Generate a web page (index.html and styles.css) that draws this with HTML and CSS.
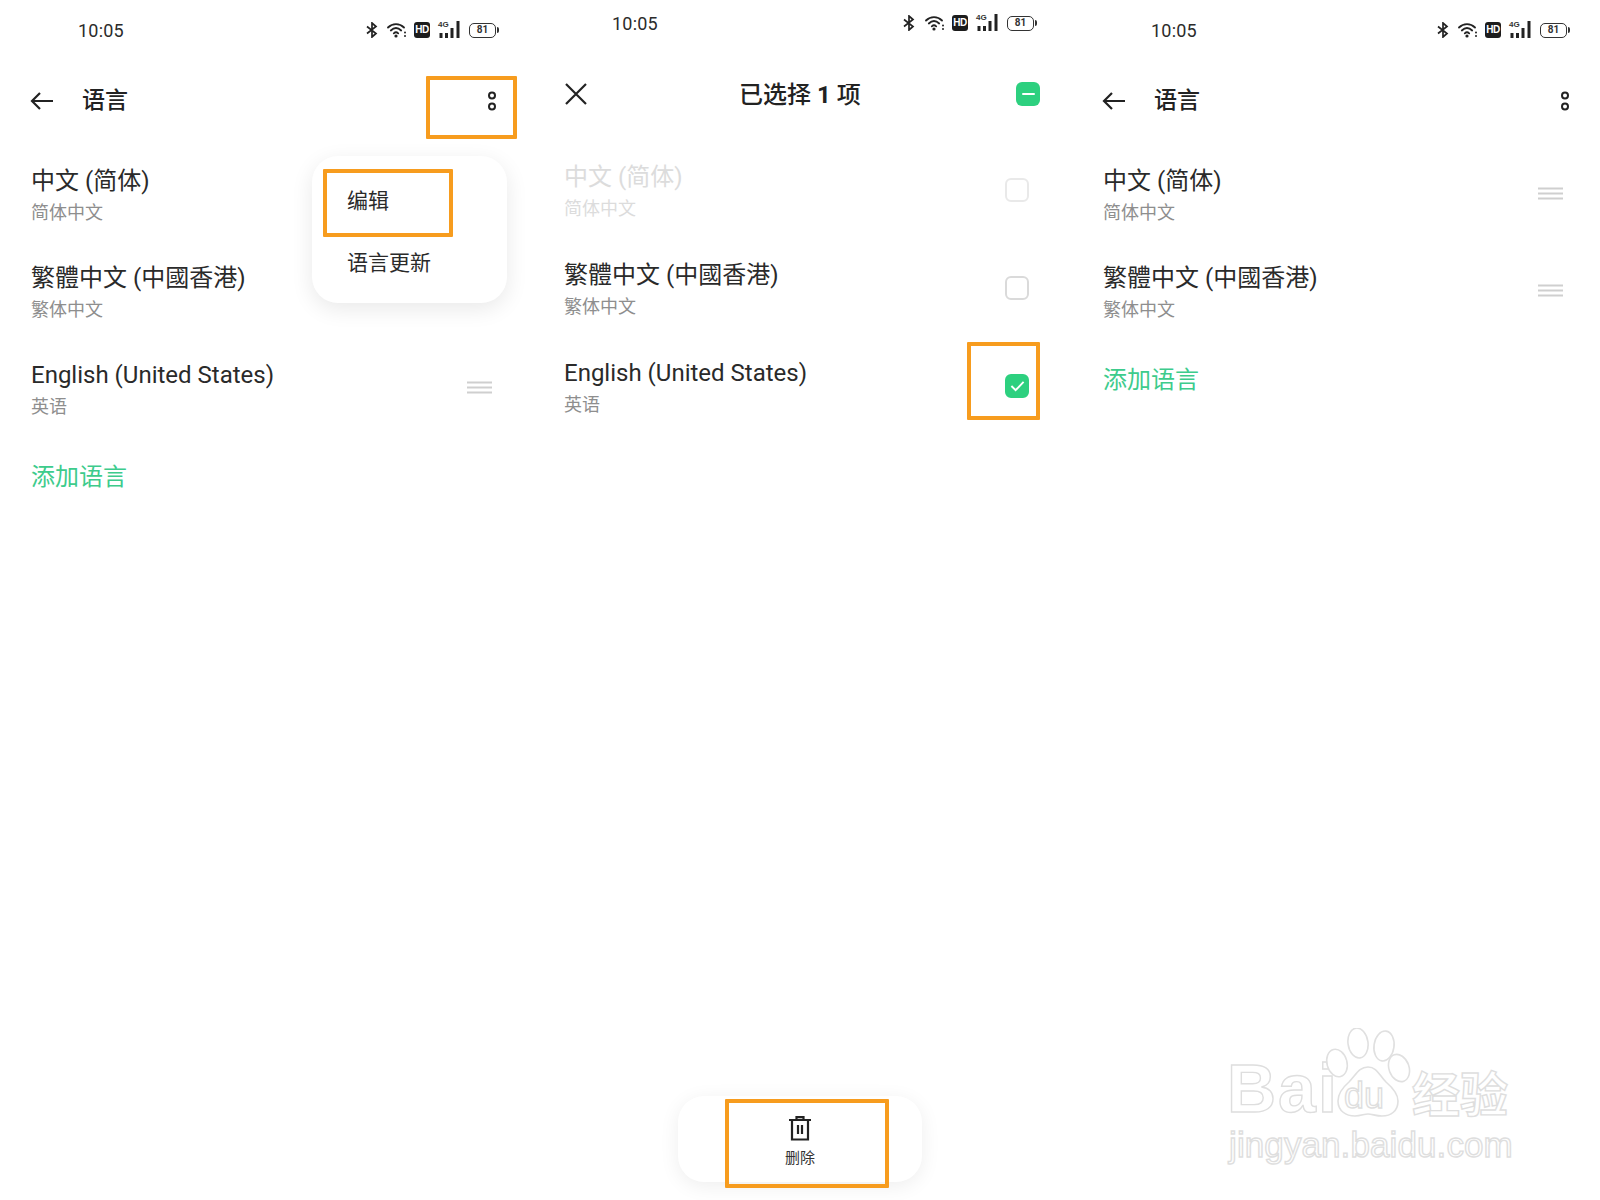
FILE: index.html
```html
<!DOCTYPE html>
<html lang="zh-CN">
<head>
<meta charset="utf-8">
<title>语言</title>
<link rel="stylesheet" href="styles.css">
</head>
<body>
<svg class="defs" width="0" height="0" aria-hidden="true">
  <symbol id="bt" viewBox="0 0 12 16"><path d="M1 4.5 10 11.5 6 15V1l4 3.5L1 11.5" fill="none" stroke="#222" stroke-width="1.7"/></symbol>
  <symbol id="wifi" viewBox="0 0 20 16"><g fill="none" stroke="#222" stroke-width="1.8" stroke-linecap="round"><path d="M1 5.5C5.5 1 12.5 1 17 5.5"/><path d="M3.8 8.5C7 5.5 11 5.5 14.2 8.5"/><path d="M6.8 11.3C8 10.2 10 10.2 11.2 11.3"/></g><circle cx="9" cy="14" r="1.6" fill="#222"/><circle cx="18" cy="10.5" r="1" fill="#222"/><circle cx="18" cy="14" r="1" fill="#222"/></symbol>
  <symbol id="signal" viewBox="0 0 22 18"><g fill="#222"><rect x="1" y="12" width="3" height="5"/><rect x="6.5" y="12" width="3" height="5"/><rect x="12" y="7" width="3" height="10"/><rect x="18" y="0" width="3" height="17"/></g></symbol>
  <symbol id="dots" viewBox="0 0 10 22"><g fill="none" stroke="#222" stroke-width="2"><circle cx="5" cy="5.5" r="3"/><circle cx="5" cy="16.5" r="3"/></g></symbol>
  <symbol id="back" viewBox="0 0 24 20"><path d="M23 10H2M10 2l-8 8 8 8" fill="none" stroke="#222" stroke-width="2.2"/></symbol>
  <symbol id="handle" viewBox="0 0 25 13"><path d="M0 1.5h25M0 6.5h25M0 11.5h25" stroke="#cfcfcf" stroke-width="1.8"/></symbol>
</svg>

<main class="page">
  <section class="panel panel-first">
    <div class="status">
      <span class="time">10:05</span>
      <div class="status-icons">
        <svg class="i-bt"><use href="#bt"/></svg>
        <svg class="i-wifi"><use href="#wifi"/></svg>
        <span class="hd">HD</span>
        <span class="net"><span class="net-label">4G</span><svg class="i-signal"><use href="#signal"/></svg></span>
        <span class="battery"><span class="battery-level">81</span></span>
      </div>
    </div>
    <header class="bar">
      <svg class="i-back"><use href="#back"/></svg>
      <h1 class="title">语言</h1>
      <svg class="i-dots"><use href="#dots"/></svg>
    </header>
    <ul class="list">
      <li class="row"><div><div class="name">中文 (简体)</div><div class="sub">简体中文</div></div></li>
      <li class="row"><div><div class="name">繁體中文 (中國香港)</div><div class="sub">繁体中文</div></div></li>
      <li class="row"><div><div class="name">English (United States)</div><div class="sub">英语</div></div><svg class="i-handle"><use href="#handle"/></svg></li>
    </ul>
    <div class="add">添加语言</div>
    <div class="menu">
      <div class="menu-item">编辑</div>
      <div class="menu-item">语言更新</div>
    </div>
    <div class="mark mark-more"></div>
    <div class="mark mark-edit"></div>
  </section>

  <section class="panel panel-select">
    <div class="status">
      <span class="time">10:05</span>
      <div class="status-icons">
        <svg class="i-bt"><use href="#bt"/></svg>
        <svg class="i-wifi"><use href="#wifi"/></svg>
        <span class="hd">HD</span>
        <span class="net"><span class="net-label">4G</span><svg class="i-signal"><use href="#signal"/></svg></span>
        <span class="battery"><span class="battery-level">81</span></span>
      </div>
    </div>
    <header class="bar bar-select">
      <svg class="i-close" viewBox="0 0 22 22"><path d="M1 1l20 20M21 1 1 21" fill="none" stroke="#222" stroke-width="2.2"/></svg>
      <h1 class="title title-select">已选择 <b>1</b> 项</h1>
      <span class="select-all"><span class="minus"></span></span>
    </header>
    <ul class="list">
      <li class="row row-select row-off"><div><div class="name">中文 (简体)</div><div class="sub">简体中文</div></div><span class="check"></span></li>
      <li class="row row-select"><div><div class="name">繁體中文 (中國香港)</div><div class="sub">繁体中文</div></div><span class="check"></span></li>
      <li class="row row-select"><div><div class="name">English (United States)</div><div class="sub">英语</div></div>
        <span class="check check-on"><svg class="i-tick" viewBox="0 0 16 12"><path d="M1.5 6 6 10.5 14.5 1.5" fill="none" stroke="#fff" stroke-width="2"/></svg></span></li>
    </ul>
    <div class="dock">
      <svg class="i-trash" viewBox="0 0 24 26"><path d="M1 5h22M8.5 5V2.2h7V5M4 5v19.5h16V5M10 10v9M14 10v9" fill="none" stroke="#222" stroke-width="2.2"/></svg>
      <span class="dock-label">删除</span>
    </div>
    <div class="mark mark-check"></div>
    <div class="mark mark-delete"></div>
  </section>

  <section class="panel panel-last">
    <div class="status">
      <span class="time">10:05</span>
      <div class="status-icons">
        <svg class="i-bt"><use href="#bt"/></svg>
        <svg class="i-wifi"><use href="#wifi"/></svg>
        <span class="hd">HD</span>
        <span class="net"><span class="net-label">4G</span><svg class="i-signal"><use href="#signal"/></svg></span>
        <span class="battery"><span class="battery-level">81</span></span>
      </div>
    </div>
    <header class="bar">
      <svg class="i-back"><use href="#back"/></svg>
      <h1 class="title">语言</h1>
      <svg class="i-dots"><use href="#dots"/></svg>
    </header>
    <ul class="list">
      <li class="row"><div><div class="name">中文 (简体)</div><div class="sub">简体中文</div></div><svg class="i-handle"><use href="#handle"/></svg></li>
      <li class="row"><div><div class="name">繁體中文 (中國香港)</div><div class="sub">繁体中文</div></div><svg class="i-handle"><use href="#handle"/></svg></li>
    </ul>
    <div class="add">添加语言</div>
    <div class="watermark">
      <div class="wm-top">
        <span class="wm-bai">Bai</span>
        <span class="wm-paw">
          <svg class="wm-paw-art" viewBox="0 0 86 90"><g fill="#fff" stroke="#e0e0e0" stroke-width="1.6"><ellipse cx="12" cy="35" rx="10" ry="14" transform="rotate(-15 12 35)"/><ellipse cx="33" cy="15" rx="10" ry="15" transform="rotate(-8 33 15)"/><ellipse cx="59" cy="18" rx="10" ry="15" transform="rotate(8 59 18)"/><ellipse cx="74" cy="40" rx="10" ry="14" transform="rotate(-20 74 40)"/><path d="M43 39c-9 0-12 8-19 15-7 6-11 12-11 19 0 10 8 15 17 15 6 0 9-2 13-2s8 2 14 2c9 0 16-5 16-15 0-7-5-13-12-19-7-7-9-15-18-15z"/></g></svg>
          <span class="wm-du">du</span>
        </span>
        <span class="wm-cn">经验</span>
      </div>
      <div class="wm-url">jingyan.baidu.com</div>
    </div>
  </section>
</main>
</body>
</html>
```

FILE: styles.css
```css
* { box-sizing: border-box; }
html, body { margin: 0; padding: 0; background: #fff; }
body { font-family: Roboto, "Noto Sans CJK SC", sans-serif; color: #222; }
.defs { position: absolute; }
ul { list-style: none; margin: 0; padding: 0; }
h1 { margin: 0; }

.page { display: grid; grid-template-columns: 533px 539px 528px; height: 1200px; overflow: hidden; position: relative; }
.panel { position: relative; height: 1200px; padding-left: 31px; display: flex; flex-direction: column; }

/* status bar */
.status { height: 60px; display: flex; align-items: center; justify-content: space-between; padding-left: 47px; padding-right: 34px; }
.time { font-size: 18px; color: #2b2b2b; letter-spacing: .2px; }
.status-icons { display: flex; align-items: center; }
.i-bt { width: 12px; height: 16px; }
.i-wifi { width: 20px; height: 16px; margin-left: 9px; }
.hd { margin-left: 7px; width: 16px; height: 16px; border-radius: 3px; background: #1c1c1c; color: #fff; font: 700 10px/16px "Liberation Sans", sans-serif; text-align: center; letter-spacing: -.4px; }
.net { margin-left: 8px; width: 23px; height: 18px; position: relative; display: block; }
.net-label { position: absolute; left: 0; top: -1px; font: 700 8px/9px "Liberation Sans", sans-serif; color: #333; }
.i-signal { width: 23px; height: 18px; display: block; }
.battery { margin-left: 8px; width: 27px; height: 15px; border: 1.5px solid #333; border-radius: 5px; position: relative; display: flex; align-items: center; justify-content: center; margin-right: 3px; }
.battery::after { content: ""; position: absolute; right: -4px; top: 3px; width: 2px; height: 6px; background: #333; border-radius: 0 2px 2px 0; }
.battery-level { font: 700 10px/12px Roboto, sans-serif; color: #333; }

/* app bar */
.bar { height: 82px; display: flex; align-items: center; padding-right: 37px; }
.panel-first .bar { padding-right: 36px; }
.i-back { width: 24px; height: 20px; margin-left: -1px; }
.title { font-size: 23px; font-weight: 500; margin-left: 28px; color: #222; flex: 1; line-height: 30px; }
.i-dots { width: 10px; height: 22px; }

/* rows */
.list { padding-top: 8px; padding-right: 41px; }
.row { height: 97px; display: flex; justify-content: space-between; align-items: center; padding-bottom: 6px; }
.name { font-size: 24px; line-height: 32px; color: #2a2a2a; white-space: nowrap; }
.sub { font-size: 18px; line-height: 26px; margin-top: 3px; color: #8e8e8e; white-space: nowrap; }
.i-handle { width: 25px; height: 13px; margin-bottom: 5px; }
.add { font-size: 24px; line-height: 32px; color: #3dcb8c; margin-top: 20px; }

/* popup menu */
.menu { position: absolute; left: 312px; top: 156px; width: 195px; height: 147px; background: #fff; border-radius: 26px; box-shadow: 0 6px 22px rgba(0, 0, 0, .09); padding: 12px 35px; }
.menu-item { height: 62px; display: flex; align-items: center; font-size: 21px; color: #2a2a2a; }

/* annotations */
.mark { position: absolute; border: 4px solid #f79c1e; border-radius: 1px; }
.mark-more { left: 426px; top: 76px; width: 91px; height: 63px; }
.mark-edit { left: 323px; top: 169px; width: 130px; height: 68px; }
.mark-check { left: 434px; top: 342px; width: 73px; height: 78px; }
.mark-delete { left: 192px; top: 1099px; width: 164px; height: 89px; }

/* selection panel */
.panel-select .status { height: 46px; padding-left: 48px; padding-right: 35px; }
.panel-select .status-icons .i-wifi { margin-left: 10px; }
.bar-select { height: 96px; padding-right: 32px; position: relative; }
.i-close { width: 22px; height: 22px; margin-left: 1px; }
.title-select { position: absolute; left: 175px; top: 34px; margin: 0; white-space: nowrap; font-size: 24px; font-weight: 500; }
.title-select b { font-weight: 700; }
.select-all { margin-left: auto; width: 24px; height: 24px; border-radius: 6px; background: #2dd07f; display: flex; align-items: center; justify-content: center; }
.minus { width: 13px; height: 2.5px; background: #fff; border-radius: 2px; }
.panel-select .list { padding-top: 3px; padding-right: 43px; }
.row-select { height: 98px; }
.row-off .name, .row-off .sub { color: #dcdcdc; }
.check { width: 24px; height: 24px; border: 2px solid #dadada; border-radius: 6px; margin-bottom: 3px; display: flex; align-items: center; justify-content: center; }
.row-off .check { border-color: #e9e9e9; }
.check-on { background: #2dd07f; border-color: #2dd07f; }
.i-tick { width: 15px; height: 12px; }
.dock { position: absolute; left: 145px; top: 1096px; width: 244px; height: 86px; background: #fff; border-radius: 26px; box-shadow: 0 4px 20px rgba(0, 0, 0, .07); display: flex; flex-direction: column; align-items: center; padding-top: 19px; }
.i-trash { width: 24px; height: 26px; }
.dock-label { font-size: 15px; line-height: 20px; margin-top: 7px; color: #333; }

/* last panel */
.panel-last .status { padding-right: 30px; padding-left: 48px; }
.panel-last .bar { padding-right: 30px; }
.panel-last .list { padding-right: 37px; }

/* watermark */
.watermark { position: absolute; left: 155px; top: 1028px; width: 300px; }
.wm-top { display: flex; align-items: flex-end; height: 90px; }
.wm-bai, .wm-cn, .wm-du, .wm-url { color: #fff; -webkit-text-stroke: 1.4px #dedede; }
.wm-bai { font: 700 68px/60px "Liberation Sans", sans-serif; letter-spacing: 2px; width: 98px; }
.wm-paw { position: relative; width: 86px; height: 90px; display: block; }
.wm-paw-art { width: 86px; height: 90px; display: block; }
.wm-du { position: absolute; left: 19px; top: 50px; font: 400 36px/36px "Liberation Sans", sans-serif; }
.wm-cn { font: 700 48px/54px "Noto Sans CJK SC", sans-serif; margin-left: 1px; }
.wm-url { font: 400 35px/44px "Liberation Sans", sans-serif; margin-top: 5px; margin-left: 2px; white-space: nowrap; letter-spacing: .1px; }
```
